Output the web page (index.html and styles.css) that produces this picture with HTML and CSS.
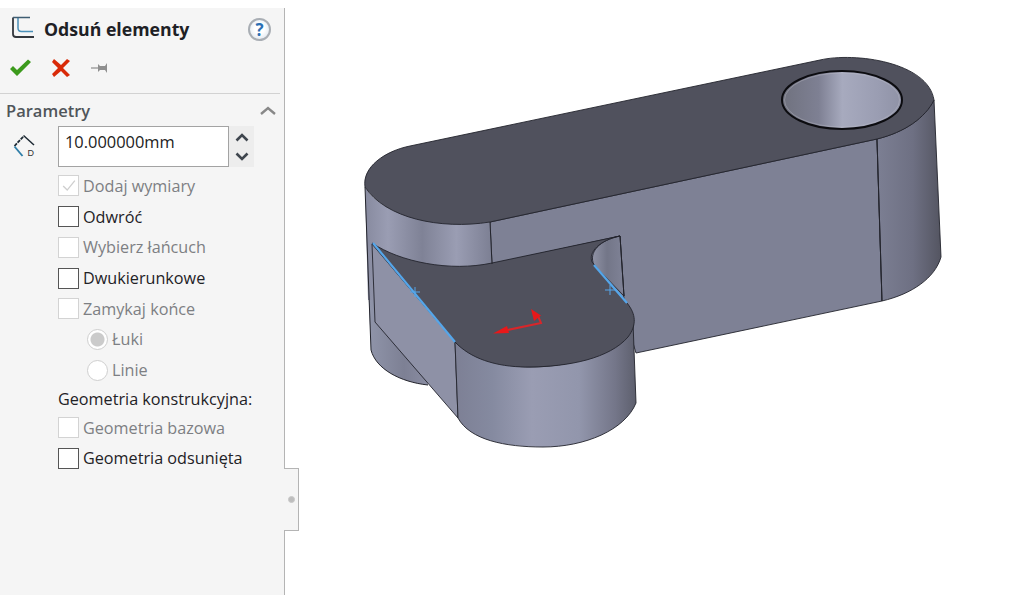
FILE: index.html
```html
<!DOCTYPE html>
<html lang="pl">
<head>
<meta charset="utf-8">
<title>Odsuń elementy</title>
<link rel="stylesheet" href="styles.css">
</head>
<body>
<div class="page">
  <aside class="panel">
    <header class="head">
      <svg class="head-icon" viewBox="0 0 26 26" width="26" height="26">
        <path d="M8 2V12q0 3.500 3.500 3.500H23" fill="none" stroke="#4a8fb8" stroke-width="1.500"/>
        <path d="M3 1.500V18q0 3 3 3H24" fill="none" stroke="#33373d" stroke-width="1.800"/>
        <path d="M3 1.500H20" fill="none" stroke="#3f5d72" stroke-width="1.500"/>
      </svg>
      <h1 class="title">Odsuń elementy</h1>
      <div class="help">?</div>
    </header>
    <div class="actions">
      <svg viewBox="0 0 24 20" width="24" height="20"><path d="M2 11l3-3 4 4L20 1.500l3 2.500L9 18z" fill="#3c9a1c"/></svg>
      <svg viewBox="0 0 20 20" width="20" height="20"><path d="M3 1l7 6 6-6 3 2-7 7 7 7-3 2-6-6-7 6-2-3 6-6-6-6z" fill="#d92a08"/></svg>
      <svg viewBox="0 0 20 14" width="20" height="14"><path d="M1 7h8" stroke="#a0a0a0" stroke-width="1.500"/><path d="M8 3l2 2h5l2-3v10l-2-3h-5l-2 2z" fill="#8f8f8f"/></svg>
    </div>
    <div class="section-head">
      <h2 class="section-title">Parametry</h2>
      <svg viewBox="0 0 16 9" width="16" height="9"><path d="M1 8l7-6 7 6" fill="none" stroke="#888" stroke-width="2.400"/></svg>
    </div>
    <div class="field-row">
      <svg class="dim-icon" viewBox="0 0 24 24" width="24" height="24">
        <path d="M1.500 12L10.500 2.500" stroke="#1d2933" stroke-width="1.800" fill="none" stroke-dasharray="3.500 1"/>
        <path d="M10.500 1.500L21 11" stroke="#1d2933" stroke-width="1.500" fill="none"/>
        <path d="M1.500 12.500L9.500 22" stroke="#2f7ea8" stroke-width="1.900" fill="none"/>
        <text x="14.500" y="22" class="dim-letter">D</text>
      </svg>
      <div class="input">10.000000mm</div>
      <div class="spinner">
        <svg viewBox="0 0 14 10" width="14" height="10"><path d="M1.500 8.500L7 3l5.500 5.500" fill="none" stroke="#3f464e" stroke-width="2.600"/></svg>
        <svg viewBox="0 0 14 10" width="14" height="10"><path d="M1.500 1.500L7 7l5.500-5.500" fill="none" stroke="#3f464e" stroke-width="2.600"/></svg>
      </div>
    </div>
    <div class="options">
      <div class="row off"><span class="box"><svg viewBox="0 0 20 20" width="18" height="18"><path d="M3.500 10l4.500 4.500L16.500 4" fill="none" stroke="#cfcfcf" stroke-width="1.500"/></svg></span>Dodaj wymiary</div>
      <div class="row"><span class="box"></span>Odwróć</div>
      <div class="row off"><span class="box"></span>Wybierz łańcuch</div>
      <div class="row"><span class="box"></span>Dwukierunkowe</div>
      <div class="row off"><span class="box"></span>Zamykaj końce</div>
      <div class="row off sub"><span class="radio checked"></span>Łuki</div>
      <div class="row off sub"><span class="radio"></span>Linie</div>
      <div class="row label">Geometria konstrukcyjna:</div>
      <div class="row off"><span class="box"></span>Geometria bazowa</div>
      <div class="row"><span class="box"></span>Geometria odsunięta</div>
    </div>
    <div class="tab"><span class="tab-dot"></span></div>
  </aside>
  <main class="viewport">
    <svg class="model" viewBox="285 0 739 595" width="739" height="595">
      <defs>
        <linearGradient id="gLeft" gradientUnits="userSpaceOnUse" x1="365" y1="0" x2="492" y2="0">
          <stop offset="0" stop-color="#878a9f"/><stop offset=".18" stop-color="#9a9db3"/><stop offset=".45" stop-color="#7f8296"/><stop offset=".72" stop-color="#9a9db3"/><stop offset="1" stop-color="#7c7f93"/>
        </linearGradient>
        <linearGradient id="gLeftLow" gradientUnits="userSpaceOnUse" x1="368" y1="0" x2="440" y2="0">
          <stop offset="0" stop-color="#9095aa"/><stop offset=".5" stop-color="#7d8094"/><stop offset="1" stop-color="#8f92a8"/>
        </linearGradient>
        <linearGradient id="gFront" gradientUnits="userSpaceOnUse" x1="456" y1="0" x2="637" y2="0">
          <stop offset="0" stop-color="#7d8095"/><stop offset=".2" stop-color="#858aa0"/><stop offset=".42" stop-color="#9a9db3"/><stop offset=".68" stop-color="#9296ac"/><stop offset=".88" stop-color="#747689"/><stop offset="1" stop-color="#5c5e6c"/>
        </linearGradient>
        <linearGradient id="gRight" gradientUnits="userSpaceOnUse" x1="877" y1="0" x2="942" y2="0">
          <stop offset="0" stop-color="#7c7f93"/><stop offset=".55" stop-color="#6e7083"/><stop offset="1" stop-color="#535460"/>
        </linearGradient>
        <linearGradient id="gHole" gradientUnits="userSpaceOnUse" x1="783" y1="0" x2="902" y2="0">
          <stop offset="0" stop-color="#70727f"/><stop offset=".3" stop-color="#7e8093"/><stop offset=".5" stop-color="#a7aabe"/><stop offset=".8" stop-color="#9a9db2"/><stop offset="1" stop-color="#8f92a6"/>
        </linearGradient>
        <linearGradient id="gPocket" gradientUnits="userSpaceOnUse" x1="592" y1="0" x2="622" y2="0">
          <stop offset="0" stop-color="#9093a6"/><stop offset=".5" stop-color="#737688"/><stop offset="1" stop-color="#7e8195"/>
        </linearGradient>
      </defs>
      <path class="edge" fill="#7e8195" d="M490 222L877 139L882 301L636 353L620 300L492 264Z"/>
      <path class="edge" fill="url(#gRight)" d="M877 139C905 132 925 118 934 100L941 257C935 278 912 294 882 301Z"/>
      <path fill="url(#gLeftLow)" d="M368 280L371 350C376 369 400 382 428 385L420 280Z"/>
      <path fill="url(#gLeft)" d="M365 187C378 210 420 228 490 222L492 264L460 300L368 300Z"/>
      <path class="seam" d="M365 187L371 350C376 369 400 382 428 385"/>
      <path class="edge" fill="#8e91a6" d="M372 244L455 342L458 418L375 322Z"/>
      <path class="edge" fill="url(#gFront)" d="M455 342C480 358 505 367 530 367C575 367 620 352 633 322L636 403C625 430 585 447 543 447C505 447 470 440 458 418Z"/>
      <path class="edge" fill="#50515d" d="M365 187C362 167 385 151 410 146L820 60C855 52 928 62 934 100C925 118 905 132 877 139L490 222C440 230 385 218 365 187Z"/>
      <path class="edge" fill="#7e8195" d="M492 264L620 236L624 300L594 265Z"/>
      <path class="edge" fill="url(#gPocket)" d="M620 236L624 296L594 265C588 252 600 240 620 236Z"/>
      <path class="edge" fill="#50515d" d="M372 243C400 262 450 272 492 263L620 236C600 240 588 252 592 262L627 303C636 314 637 325 628 337C610 358 570 367 527 367C495 367 470 358 455 342Z"/>
      <path class="seam" d="M490 222L492 264"/>
      <path class="seam" d="M877 139L882 301"/>
      <path class="seam" d="M620 236L624 296"/>
      <path class="blue" d="M373 243L455 342"/>
      <path class="blue" d="M594 265L627 303"/>
      <path class="blue-thin" d="M410 292H420M415 287V297"/>
      <path class="blue-thin" d="M605 290H615M610 285V295"/>
      <ellipse class="hole" cx="842" cy="100" rx="60" ry="29" fill="url(#gHole)"/>
      <ellipse class="hole-in" cx="842" cy="100" rx="57.500" ry="27"/>
      <path class="red" d="M505 330.500L541 323L538 316"/>
      <path fill="#e8181a" d="M493 333.500L507 326L509 333Z"/>
      <path fill="#e8181a" d="M531 309L541 315.500L534 321Z"/>
    </svg>
  </main>
</div>
</body>
</html>
```
FILE: styles.css
```css
* { box-sizing: border-box; }
html, body { margin: 0; padding: 0; background: #fff; }
body { font-family: "Open Sans", "Noto Sans", sans-serif; overflow: hidden; }
.page { display: flex; height: 595px; }
.panel {
  position: relative;
  flex: 0 0 285px;
  margin-top: 8px;
  background: #f5f5f5;
  border-right: 1px solid #b4b4b4;
  color: #222;
}
.head { display: flex; align-items: center; height: 42px; padding: 0 13px 0 10px; }
.head-icon { flex: none; margin-right: 8px; }
.title { flex: 1; margin: 0; font-size: 17.700px; font-weight: 700; color: #1e2125; white-space: nowrap; }
.help {
  width: 23px; height: 23px; border-radius: 50%;
  border: 2px solid #a9aeb4;
  background: radial-gradient(circle at 50% 45%, #fff 35%, #d5dfe9 100%);
  color: #2b6fb3; font-weight: 700; font-size: 17px; line-height: 19px; text-align: center;
}
.actions { display: flex; align-items: center; gap: 19px; height: 43px; padding: 0 0 8px 8px; }
.section-head {
  display: flex; align-items: center; justify-content: space-between;
  margin: 0 4px 0 0; height: 33px; padding: 1px 4px 0 6px;
  border-top: 1px solid #d2d2d2;
}
.section-title { margin: 0; font-size: 16.500px; font-weight: 600; color: #50555a; }
.field-row { display: flex; height: 41px; padding-left: 13px; }
.dim-icon { flex: none; margin: 8px 21px 0 0; }
.input {
  width: 171px; padding: 3px 0 0 6px;
  background: #fff; border: 1px solid #a3a3a3;
  font-size: 16.400px; color: #222;
}
.spinner { display: flex; flex-direction: column; align-items: center; justify-content: center; gap: 10px; width: 25px; background: #ededed; }
.options { margin-top: 3.600px; padding-left: 58px; font-size: 16.200px; }
.row { display: flex; align-items: center; height: 30.700px; white-space: nowrap; color: #1f2226; }
.row.off { color: #7d7f83; }
.row.sub { padding-left: 29px; }
.row.label { height: 27px; }
.box { flex: none; display: flex; align-items: center; justify-content: center; width: 21px; height: 21px; margin-right: 4px; background: #fff; border: 1.500px solid #555; }
.off .box { border-color: #d3d3d3; }
.radio { flex: none; width: 21px; height: 21px; margin-right: 4px; background: #fff; border: 1.500px solid #cfcfcf; border-radius: 50%; }
.radio.checked { background: radial-gradient(circle, #cbcbcb 0 6.500px, #fff 7.500px); }
.tab {
  position: absolute; left: 284px; top: 460px; width: 15px; height: 63px;
  display: flex; align-items: center; justify-content: center;
  background: #f5f5f5; border: 1px solid #b4b4b4; border-left: 0;
}
.tab-dot { width: 7px; height: 7px; border-radius: 50%; background: #bdbdbd; border: 1px solid #c9c9c9; }
.viewport { flex: 1; min-width: 0; }
.model { display: block; }
.edge { stroke: #23242c; stroke-width: .9; stroke-linejoin: round; }
.seam { stroke: #23242c; stroke-width: 1; fill: none; }
.blue { stroke: #55a6ea; stroke-width: 2.200; fill: none; }
.blue-thin { stroke: #55a6ea; stroke-width: 1; fill: none; }
.hole { stroke: #0c0c10; stroke-width: 2; }
.hole-in { fill: none; stroke: #c2c4cc; stroke-width: .7; opacity: .5; }
.red { stroke: #d8262a; stroke-width: 2; fill: none; }
.dim-letter { font-family: "Liberation Sans", sans-serif; font-size: 9px; fill: #333; }
```
